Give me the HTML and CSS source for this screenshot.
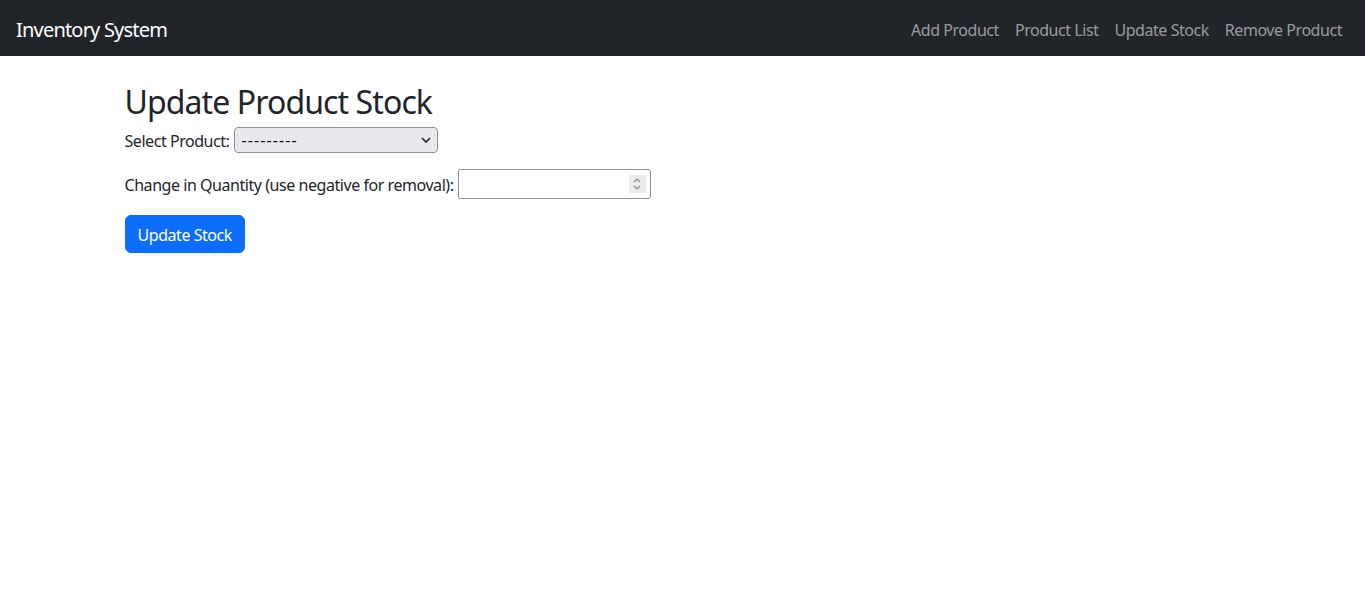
FILE: index.html
```html
<!DOCTYPE html>
<html lang="en">
<head>
<meta charset="utf-8">
<title>Update Stock</title>
<link rel="stylesheet" href="styles.css">
</head>
<body>
<nav class="navbar">
  <a class="brand" href="#">Inventory System</a>
  <ul class="nav">
    <li><a href="#">Add Product</a></li>
    <li><a href="#">Product List</a></li>
    <li><a href="#">Update Stock</a></li>
    <li><a href="#">Remove Product</a></li>
  </ul>
</nav>
<main class="container">
  <h2 class="title">Update Product Stock</h2>
  <form class="form">
    <p class="field"><label for="product">Select Product:</label><select id="product" class="select"><option>---------</option></select></p>
    <p class="field"><label for="qty">Change in Quantity (use negative for removal):</label><span class="num-wrap"><input id="qty" class="number" type="number"><span class="spin" aria-hidden="true"><svg width="10" height="16" viewBox="0 0 10 16"><path d="M2 6 L5 3 L8 6" fill="none" stroke="#8a8a8a" stroke-width="1.2"/><path d="M2 10 L5 13 L8 10" fill="none" stroke="#8a8a8a" stroke-width="1.2"/></svg></span></span></p>
    <button type="button" class="btn">Update Stock</button>
  </form>
</main>
</body>
</html>
```
FILE: styles.css
```css
* { box-sizing: border-box; }
html, body { margin: 0; }
body {
  font-family: "Noto Sans", "Open Sans", sans-serif;
  font-size: 16px;
  line-height: 1.5;
  letter-spacing: -0.45px;
  color: #212529;
  background: #fff;
}
.navbar {
  height: 56px;
  background: #212529;
  display: flex;
  align-items: center;
  justify-content: space-between;
  padding: 3px 15px 0 16px;
}
.brand {
  color: #fff;
  text-decoration: none;
  font-size: 20px;
  letter-spacing: -0.8px;
}
.nav {
  list-style: none;
  margin: 0;
  padding: 0;
  display: flex;
}
.nav a {
  display: block;
  padding: 8px;
  color: rgba(255,255,255,.55);
  text-decoration: none;
}
.container {
  max-width: 1140px;
  margin: 24px auto 0;
  padding: 0 12px;
}
.title {
  font-size: 32px;
  font-weight: 400;
  line-height: 1.2;
  letter-spacing: -0.9px;
  margin: 0 0 6px;
  padding-top: 3px;
}
.form { margin: 0; }
.field {
  margin: 0 0 16px;
  display: flex;
  align-items: center;
  gap: 4px;
}
.field label { padding-top: 1px; }
.select {
  -webkit-appearance: none;
  appearance: none;
  font: inherit;
  font-size: 16px;
  letter-spacing: 1.1px;
  line-height: 1.2;
  color: #000;
  width: 204px;
  height: 26px;
  margin: 0 0 0 1px;
  padding: 1px 20px 0 6px;
  background: #e9e9ed url("data:image/svg+xml;utf8,<svg xmlns='http://www.w3.org/2000/svg' width='10' height='6' viewBox='0 0 10 6'><path d='M1 1 L5 5 L9 1' fill='none' stroke='%23222' stroke-width='1.6'/></svg>") no-repeat right 6px center;
  border: 1px solid #8f8f9d;
  border-radius: 4px;
}
.num-wrap {
  position: relative;
  display: inline-block;
  width: 193px;
  height: 30px;
}
.number {
  -webkit-appearance: none;
  appearance: textfield;
  font: inherit;
  width: 193px;
  height: 30px;
  margin: 0;
  padding: 1px 24px 1px 4px;
  border: 1px solid #8f8f9d;
  border-radius: 2px;
  background: #fff;
}
.number::-webkit-inner-spin-button,
.number::-webkit-outer-spin-button {
  -webkit-appearance: none;
  margin: 0;
}
.spin {
  position: absolute;
  top: 6px;
  right: 5px;
  width: 17px;
  height: 18px;
  background: #ececef;
  display: flex;
  align-items: center;
  justify-content: center;
  pointer-events: none;
}
.btn {
  font: inherit;
  letter-spacing: -0.45px;
  color: #fff;
  background: #0d6efd;
  border: 1px solid #0d6efd;
  border-radius: 6px;
  padding: 7px 12px 5px;
  cursor: pointer;
}
```
